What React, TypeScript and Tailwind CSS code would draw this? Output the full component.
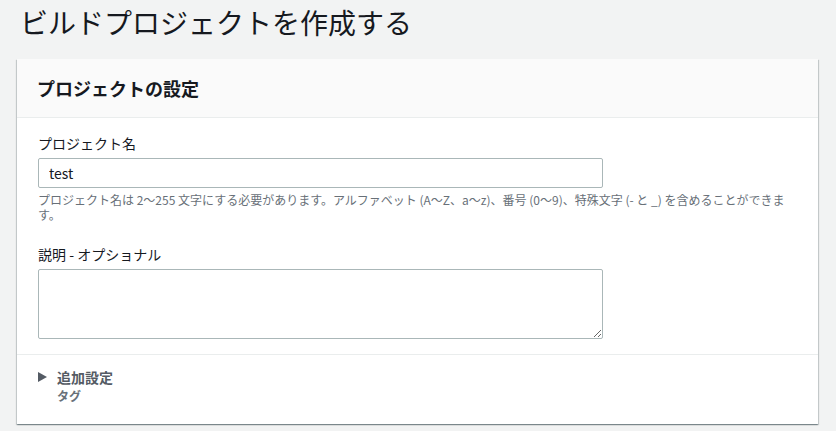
import React from "react";

export default function App() {
  const font = { fontFamily: '"Noto Sans CJK JP", "Noto Sans", sans-serif' };
  return (
    <div className="min-h-[431px] w-full bg-[#f2f3f3] pl-[17px] pr-[18px] text-[#16191f]" style={font}>
      <h1 className="pt-[3px] pl-[3px] text-[28px] leading-[38px] font-normal text-[#16191f]">ビルドプロジェクトを作成する</h1>
      <div className="mt-[18px] bg-white shadow-[0_1px_1px_0_rgba(0,28,36,0.3),1px_1px_1px_0_rgba(0,28,36,0.15),-1px_1px_1px_0_rgba(0,28,36,0.15)]">
        <div className="flex h-[59px] items-center border-b border-[#eaeded] bg-[#fafafa] pl-[20px]">
          <h2 className="text-[18px] font-bold leading-[24px]">プロジェクトの設定</h2>
        </div>
        <div className="border-b border-[#eaeded] px-[21px] pt-[14px] pb-[15px]">
          <label className="block text-[14px] leading-[22px]">プロジェクト名</label>
          <input
            readOnly
            value="test"
            className="mt-[4px] block h-[30px] w-[565px] rounded-[2px] border border-[#aab7b8] bg-white px-[10px] text-[14px] text-[#16191f] outline-none"
            style={font}
          />
          <p className="mt-[4px] w-[760px] text-[12px] leading-[15px] text-[#687078]">
            プロジェクト名は 2〜255 文字にする必要があります。アルファベット (A〜Z、a〜z)、番号 (0〜9)、特殊文字 (- と _) を含めることができます。
          </p>
          <label className="mt-[21px] block text-[14px] leading-[22px]">説明 - オプショナル</label>
          <textarea
            className="mt-[4px] block h-[70px] w-[565px] rounded-[2px] border border-[#aab7b8] bg-white px-[10px] text-[14px] outline-none"
            style={font}
          />
        </div>
        <div className="px-[21px] pt-[12px] pb-[19px]">
          <div className="flex items-center gap-[10px]">
            <svg width="9" height="10" viewBox="0 0 9 10" className="shrink-0">
              <path d="M0 0 L9 5 L0 10 Z" fill="#545b64" />
            </svg>
            <span className="text-[14px] font-bold leading-[20px] text-[#545b64]">追加設定</span>
          </div>
          <div className="pl-[19px] text-[12px] font-bold leading-[18px] text-[#687078]">タグ</div>
        </div>
      </div>
    </div>
  );
}
